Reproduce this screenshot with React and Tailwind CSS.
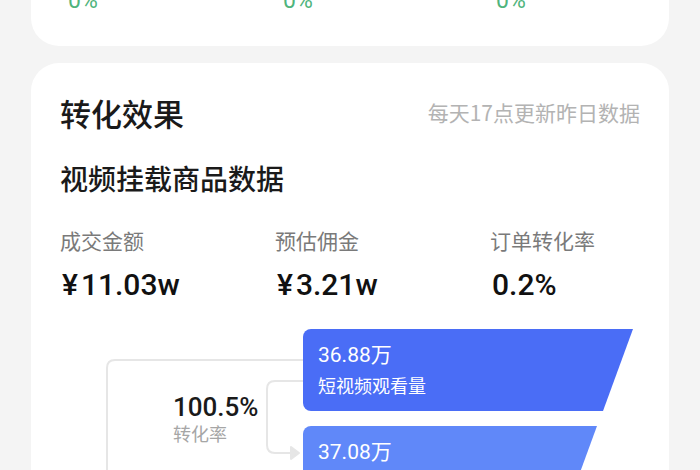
import React from "react";

const CN = { fontFamily: "'Noto Sans CJK SC', 'Noto Sans', sans-serif" };
const NUM = { fontFamily: "Roboto, 'Noto Sans CJK SC', sans-serif" };

export default function App() {
  return (
    <div className="w-[700px] h-[470px] overflow-hidden bg-[#f4f4f4]" style={CN}>
      {/* top card (partially visible) */}
      <div className="mx-[31px] -mt-[40px] h-[86px] rounded-[28px] bg-white pt-[28px] pl-[37px]">
        <div className="flex text-[23px] leading-[26px] text-[#4fb47c]" style={NUM}>
          <div className="w-[215px]">0%</div>
          <div className="w-[213px]">0%</div>
          <div>0%</div>
        </div>
      </div>

      {/* conversion card */}
      <div className="mx-[31px] mt-[17px] rounded-[28px] bg-white pl-[29px] pr-[29px] pt-[30px] h-[500px]">
        <div className="flex items-center justify-between h-[40px]">
          <div className="text-[31px] font-medium text-[#1a1a1a]">转化效果</div>
          <div className="text-[21px] text-[#b3b3b3]">每天17点更新昨日数据</div>
        </div>
        <div className="mt-[25px] h-[40px] flex items-center text-[28px] font-medium text-[#1a1a1a]">
          视频挂载商品数据
        </div>

        <div className="mt-[28px] flex">
          {[
            ["成交金额", "¥11.03w"],
            ["预估佣金", "¥3.21w"],
            ["订单转化率", "0.2%"],
          ].map(([label, value], i) => (
            <div key={i} className={i < 2 ? "w-[215px]" : ""}>
              <div className="text-[21px] leading-[28px] text-[#7a7a7a]">{label}</div>
              <div
                className="mt-[10px] h-[40px] flex items-center text-[30px] font-medium text-[#111] pl-[2px]"
                style={NUM}
              >
                {value.startsWith("¥") ? (
                  <>
                    <span className="mr-[3px]">¥</span>
                    {value.slice(1)}
                  </>
                ) : (
                  value
                )}
              </div>
            </div>
          ))}
        </div>

        {/* funnel */}
        <div className="relative mt-[25px] flex">
          <svg
            className="absolute left-0 top-0"
            width="250"
            height="160"
            viewBox="0 0 250 160"
            fill="none"
          >
            <path d="M243 31 H55 Q47 31 47 39 V160" stroke="#e6e6e6" strokeWidth="2" />
            <path d="M243 52 H215 Q207 52 207 60 V116 Q207 124 215 124 H237" stroke="#e6e6e6" strokeWidth="2" />
            <path d="M231 118 L239 124 L231 130 Z" fill="#e6e6e6" stroke="#e6e6e6" strokeWidth="2" strokeLinejoin="round" />
          </svg>
          <div className="relative w-[243px] pl-[113px] pt-[63px]">
            <div className="text-[26px] leading-[30px] font-medium text-[#1a1a1a]" style={NUM}>100.5%</div>
            <div className="text-[18px] leading-[22px] text-[#a6a6a6]">转化率</div>
          </div>
          <div className="flex flex-col gap-[15px]">
            <div className="w-[330px] h-[82px] rounded-l-[8px] bg-[#4a6df6] pl-[15px] pt-[12px] text-white [clip-path:polygon(0_0,100%_0,calc(100%-30px)_100%,0_100%)]">
              <div className="text-[21px] leading-[28px]" style={NUM}>36.88万</div>
              <div className="mt-[4px] text-[18px] leading-[24px]">短视频观看量</div>
            </div>
            <div className="w-[294px] h-[82px] rounded-l-[8px] bg-[#6088f9] pl-[15px] pt-[12px] text-white [clip-path:polygon(0_0,100%_0,calc(100%-30px)_100%,0_100%)]">
              <div className="text-[21px] leading-[28px]" style={NUM}>37.08万</div>
              <div className="mt-[4px] text-[18px] leading-[24px]">短视频点击量</div>
            </div>
          </div>
        </div>
      </div>
    </div>
  );
}
